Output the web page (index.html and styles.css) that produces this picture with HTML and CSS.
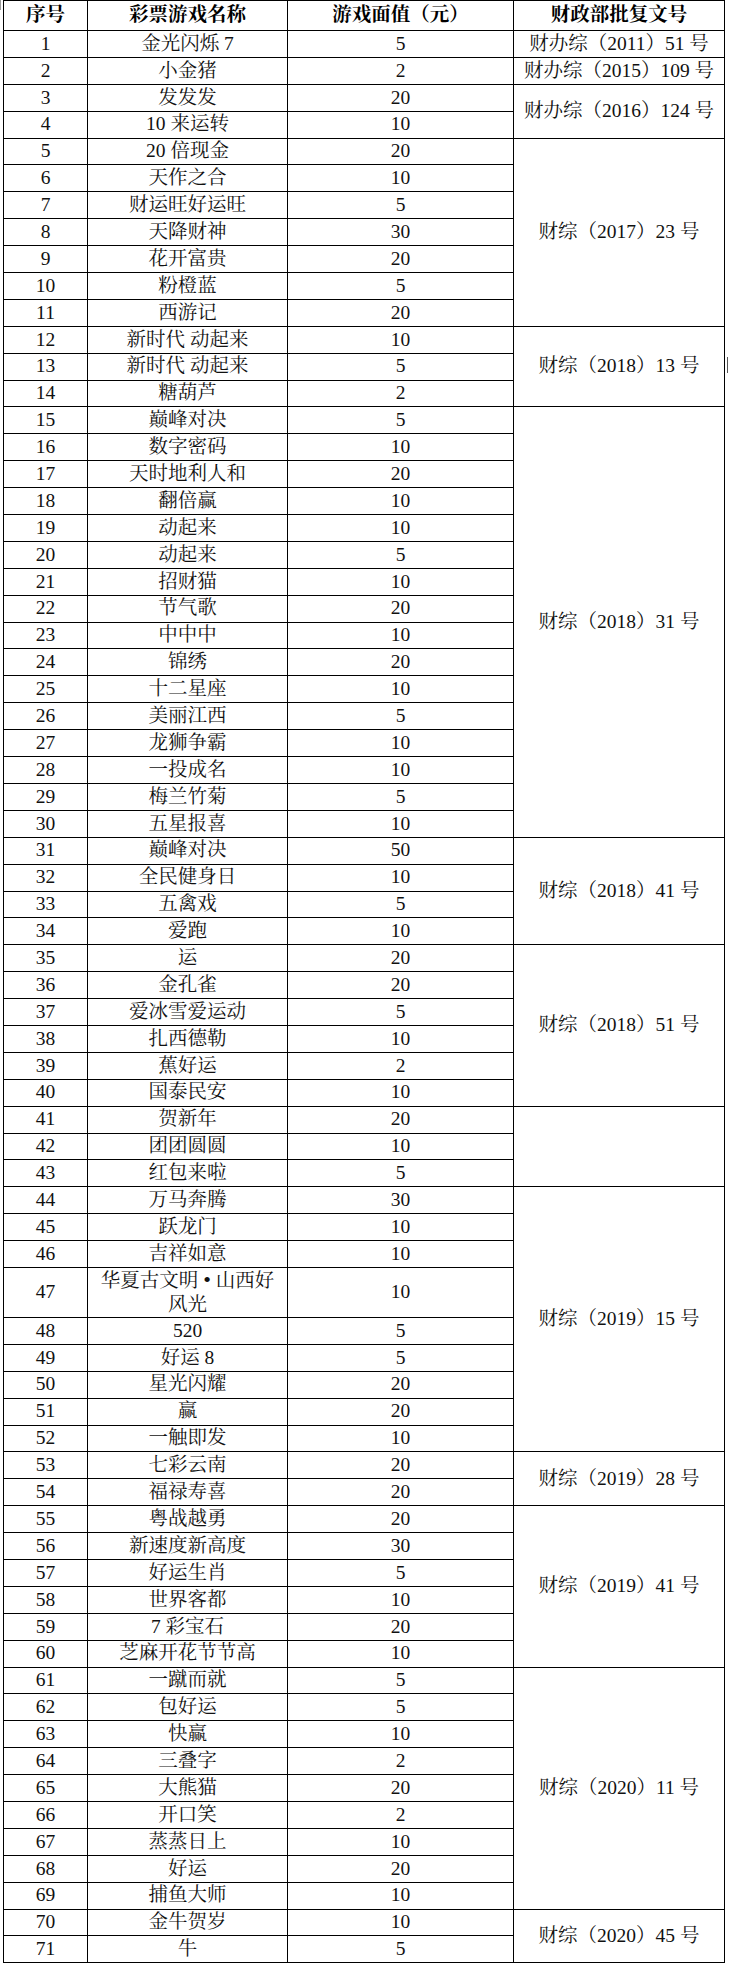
FILE: index.html
```html
<!DOCTYPE html>
<html lang="zh-CN">
<head>
<meta charset="utf-8">
<title>即开型彩票游戏一览</title>
<link rel="stylesheet" href="styles.css">
</head>
<body>
<div class="page">
<span class="mark mark-corner"></span>
<span class="mark mark-side"></span>
<table class="games">
<colgroup>
<col class="c-no"><col class="c-name"><col class="c-value"><col class="c-doc">
</colgroup>
<thead>
<tr><th>序号</th><th>彩票游戏名称</th><th>游戏面值（元）</th><th>财政部批复文号</th></tr>
</thead>
<tbody>
<tr><td>1</td><td>金光闪烁 7</td><td>5</td><td>财办综（2011）51 号</td></tr>
<tr><td>2</td><td>小金猪</td><td>2</td><td>财办综（2015）109 号</td></tr>
<tr><td>3</td><td>发发发</td><td>20</td><td rowspan="2">财办综（2016）124 号</td></tr>
<tr><td>4</td><td>10 来运转</td><td>10</td></tr>
<tr><td>5</td><td>20 倍现金</td><td>20</td><td rowspan="7">财综（2017）23 号</td></tr>
<tr><td>6</td><td>天作之合</td><td>10</td></tr>
<tr><td>7</td><td>财运旺好运旺</td><td>5</td></tr>
<tr><td>8</td><td>天降财神</td><td>30</td></tr>
<tr><td>9</td><td>花开富贵</td><td>20</td></tr>
<tr><td>10</td><td>粉橙蓝</td><td>5</td></tr>
<tr><td>11</td><td>西游记</td><td>20</td></tr>
<tr><td>12</td><td>新时代 动起来</td><td>10</td><td rowspan="3">财综（2018）13 号</td></tr>
<tr><td>13</td><td>新时代 动起来</td><td>5</td></tr>
<tr><td>14</td><td>糖葫芦</td><td>2</td></tr>
<tr><td>15</td><td>巅峰对决</td><td>5</td><td rowspan="16">财综（2018）31 号</td></tr>
<tr><td>16</td><td>数字密码</td><td>10</td></tr>
<tr><td>17</td><td>天时地利人和</td><td>20</td></tr>
<tr><td>18</td><td>翻倍赢</td><td>10</td></tr>
<tr><td>19</td><td>动起来</td><td>10</td></tr>
<tr><td>20</td><td>动起来</td><td>5</td></tr>
<tr><td>21</td><td>招财猫</td><td>10</td></tr>
<tr><td>22</td><td>节气歌</td><td>20</td></tr>
<tr><td>23</td><td>中中中</td><td>10</td></tr>
<tr><td>24</td><td>锦绣</td><td>20</td></tr>
<tr><td>25</td><td>十二星座</td><td>10</td></tr>
<tr><td>26</td><td>美丽江西</td><td>5</td></tr>
<tr><td>27</td><td>龙狮争霸</td><td>10</td></tr>
<tr><td>28</td><td>一投成名</td><td>10</td></tr>
<tr><td>29</td><td>梅兰竹菊</td><td>5</td></tr>
<tr><td>30</td><td>五星报喜</td><td>10</td></tr>
<tr><td>31</td><td>巅峰对决</td><td>50</td><td rowspan="4">财综（2018）41 号</td></tr>
<tr><td>32</td><td>全民健身日</td><td>10</td></tr>
<tr><td>33</td><td>五禽戏</td><td>5</td></tr>
<tr><td>34</td><td>爱跑</td><td>10</td></tr>
<tr><td>35</td><td>运</td><td>20</td><td rowspan="6">财综（2018）51 号</td></tr>
<tr><td>36</td><td>金孔雀</td><td>20</td></tr>
<tr><td>37</td><td>爱冰雪爱运动</td><td>5</td></tr>
<tr><td>38</td><td>扎西德勒</td><td>10</td></tr>
<tr><td>39</td><td>蕉好运</td><td>2</td></tr>
<tr><td>40</td><td>国泰民安</td><td>10</td></tr>
<tr><td>41</td><td>贺新年</td><td>20</td><td rowspan="3"></td></tr>
<tr><td>42</td><td>团团圆圆</td><td>10</td></tr>
<tr><td>43</td><td>红包来啦</td><td>5</td></tr>
<tr><td>44</td><td>万马奔腾</td><td>30</td><td rowspan="9">财综（2019）15 号</td></tr>
<tr><td>45</td><td>跃龙门</td><td>10</td></tr>
<tr><td>46</td><td>吉祥如意</td><td>10</td></tr>
<tr class="tall"><td>47</td><td>华夏古文明 <span class="dot">•</span> 山西好<br>风光</td><td>10</td></tr>
<tr><td>48</td><td>520</td><td>5</td></tr>
<tr><td>49</td><td>好运 8</td><td>5</td></tr>
<tr><td>50</td><td>星光闪耀</td><td>20</td></tr>
<tr><td>51</td><td>赢</td><td>20</td></tr>
<tr><td>52</td><td>一触即发</td><td>10</td></tr>
<tr><td>53</td><td>七彩云南</td><td>20</td><td rowspan="2">财综（2019）28 号</td></tr>
<tr><td>54</td><td>福禄寿喜</td><td>20</td></tr>
<tr><td>55</td><td>粤战越勇</td><td>20</td><td rowspan="6">财综（2019）41 号</td></tr>
<tr><td>56</td><td>新速度新高度</td><td>30</td></tr>
<tr><td>57</td><td>好运生肖</td><td>5</td></tr>
<tr><td>58</td><td>世界客都</td><td>10</td></tr>
<tr><td>59</td><td>7 彩宝石</td><td>20</td></tr>
<tr><td>60</td><td>芝麻开花节节高</td><td>10</td></tr>
<tr><td>61</td><td>一蹴而就</td><td>5</td><td rowspan="9">财综（2020）11 号</td></tr>
<tr><td>62</td><td>包好运</td><td>5</td></tr>
<tr><td>63</td><td>快赢</td><td>10</td></tr>
<tr><td>64</td><td>三叠字</td><td>2</td></tr>
<tr><td>65</td><td>大熊猫</td><td>20</td></tr>
<tr><td>66</td><td>开口笑</td><td>2</td></tr>
<tr><td>67</td><td>蒸蒸日上</td><td>10</td></tr>
<tr><td>68</td><td>好运</td><td>20</td></tr>
<tr><td>69</td><td>捕鱼大师</td><td>10</td></tr>
<tr><td>70</td><td>金牛贺岁</td><td>10</td><td rowspan="2">财综（2020）45 号</td></tr>
<tr><td>71</td><td>牛</td><td>5</td></tr>
</tbody>
</table>
</div>
</body>
</html>
```

FILE: styles.css
```css
html, body {
  margin: 0;
  padding: 0;
  background: #ffffff;
}

.page {
  position: relative;
}

.mark {
  position: absolute;
  display: block;
  background: #9a9a9a;
}

.mark-corner {
  left: 0;
  top: 0;
  width: 1px;
  height: 10px;
}

.mark-side {
  left: 727px;
  top: 357px;
  width: 1px;
  height: 16px;
  background: #555555;
}

.games {
  margin: 0 0 0 3px;
  border-collapse: collapse;
  table-layout: fixed;
  width: 721px;
  font-family: "Liberation Serif", "Noto Serif CJK SC", "Noto Sans CJK SC", serif;
  font-size: 19.5px;
  color: #111111;
}

.c-no { width: 84px; }
.c-name { width: 200px; }
.c-value { width: 226px; }
.c-doc { width: 211px; }

.games th,
.games td {
  border: 1px solid #000000;
  padding: 0 2px;
  text-align: center;
  vertical-align: middle;
  line-height: 1.15;
  white-space: nowrap;
}

.games th {
  font-weight: bold;
  color: #000000;
}

.games thead tr {
  height: 30px;
}

.games tbody tr {
  height: 26.9px;
}

.games tbody tr.tall {
  height: 48.5px;
}

.games tbody tr.tall td {
  line-height: 24px;
}

.dot {
  font-size: 22px;
}
```
